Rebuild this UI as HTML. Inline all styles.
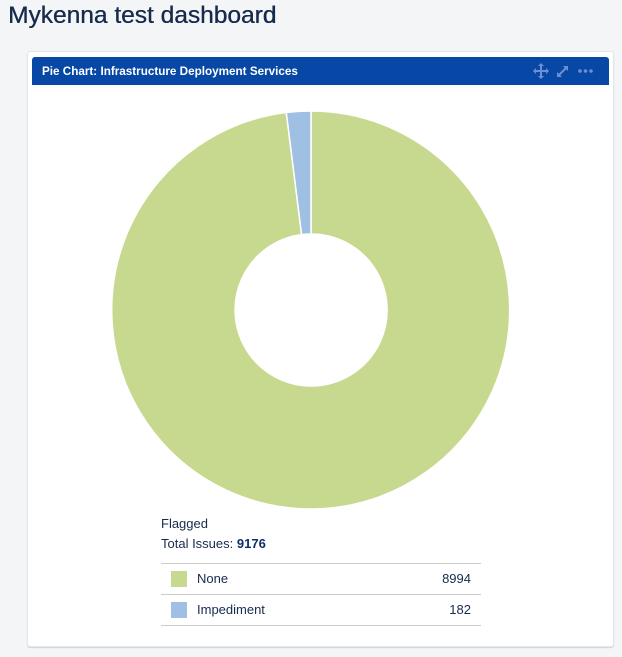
<!DOCTYPE html>
<html><head><meta charset="utf-8"><style>
html,body{margin:0;padding:0;background:#f4f5f7;width:622px;height:657px;overflow:hidden;font-family:"Liberation Sans",sans-serif;color:#172b4d}
h1{position:absolute;left:8px;top:2px;margin:0;font-size:24.5px;font-weight:normal;color:#172b4d;text-shadow:0.4px 0 0 #172b4d}
.card{position:absolute;left:27px;top:51px;width:585px;height:594px;background:#fff;border:1px solid #e4e6ea;border-radius:3px;box-shadow:0 1px 1px rgba(9,30,66,.15)}
.hdr{position:absolute;left:32px;top:57px;width:577px;height:28px;background:#0747a6;border-radius:3px 3px 0 0}
.hdr span{position:absolute;left:10px;top:8px;color:#fff;font-size:11.7px;font-weight:bold}
.t{position:absolute;font-size:13px;color:#172b4d}
.line{position:absolute;left:161px;width:320px;height:1px;background:#ccc}
.sq{position:absolute;left:171px;width:16px;height:16px}
</style></head><body>
<h1>Mykenna test dashboard</h1>
<div class="card"></div>
<div class="hdr"><span>Pie Chart: Infrastructure Deployment Services</span>
<svg style="position:absolute;left:501px;top:6px" width="70" height="16" viewBox="0 0 70 16">
<g fill="#6f8fd0" stroke="#6f8fd0">
<path d="M8 1v14M1 8h14" stroke-width="2" fill="none"/>
<path d="M8 0l3 3h-6zM8 16l3-3h-6zM0 8l3-3v6zM16 8l-3-3v6z" stroke="none"/>
<path d="M25 13l9-9" stroke-width="2"/>
<path d="M30 3h5v5zM24 9v5h5z" stroke="none"/>
<circle cx="47" cy="8" r="1.8" stroke="none"/><circle cx="52.5" cy="8" r="1.8" stroke="none"/><circle cx="58" cy="8" r="1.8" stroke="none"/>
</g></svg></div>
<svg style="position:absolute;left:0;top:0" width="622" height="657">
<path d="M311 111 A199 199 0 1 1 286.3 112.5 L301.6 234.6 A76 76 0 1 0 311 234 Z" fill="#c7d88f" stroke="#fff" stroke-width="1.5"/>
<path d="M311 111 A199 199 0 0 0 286.3 112.5 L301.6 234.6 A76 76 0 0 1 311 234 Z" fill="#9fbfe3" stroke="#fff" stroke-width="1.5"/>
</svg>
<div class="t" style="left:161px;top:516px">Flagged</div>
<div class="t" style="left:161px;top:536px">Total Issues: <b style="color:#0d2f6b">9176</b></div>
<div class="line" style="top:563px"></div>
<div class="sq" style="top:571px;background:#c7d88f"></div>
<div class="t" style="left:197px;top:571px">None</div>
<div class="t" style="left:400px;width:71px;text-align:right;top:571px">8994</div>
<div class="line" style="top:594px"></div>
<div class="sq" style="top:602px;background:#9fbfe3"></div>
<div class="t" style="left:197px;top:602px">Impediment</div>
<div class="t" style="left:400px;width:71px;text-align:right;top:602px">182</div>
<div class="line" style="top:625px"></div>
</body></html>
